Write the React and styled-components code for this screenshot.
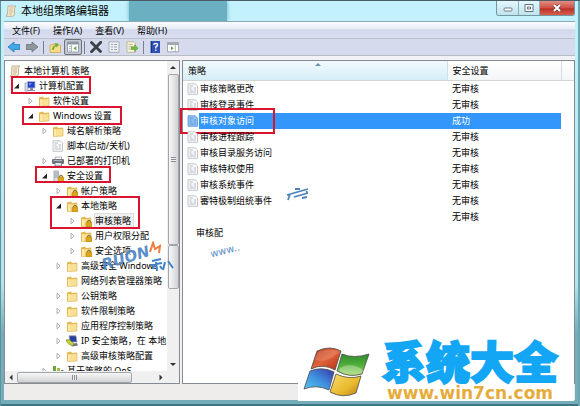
import styled, {createGlobalStyle, css} from 'styled-components';

const tree = [
  {level: 0, icon: 'scroll', text: '本地计算机 策略'},
  {level: 1, icon: 'computer', text: '计算机配置', open: true, mark: {left: 5, width: 80, height: 18}},
  {level: 2, icon: 'folder', text: '软件设置', closed: true},
  {level: 2, icon: 'folder', text: 'Windows 设置', open: true, mark: {left: 16, width: 100, height: 19}},
  {level: 3, icon: 'folder', text: '域名解析策略', closed: true},
  {level: 3, icon: 'script', text: '脚本(启动/关机)'},
  {level: 3, icon: 'printer', text: '已部署的打印机', closed: true},
  {level: 3, icon: 'server', text: '安全设置', open: true, mark: {left: 29, width: 76, height: 17}},
  {level: 4, icon: 'locked', text: '帐户策略', closed: true},
  {level: 4, icon: 'locked', text: '本地策略', open: true, mark: {left: 44, width: 90, height: 33}},
  {level: 5, icon: 'locked', text: '审核策略', closed: true, current: true},
  {level: 5, icon: 'locked', text: '用户权限分配', closed: true},
  {level: 5, icon: 'locked', text: '安全选项', closed: true},
  {level: 4, icon: 'folder', text: '高级安全 Windows', closed: true},
  {level: 4, icon: 'folder', text: '网络列表管理器策略'},
  {level: 4, icon: 'folder', text: '公钥策略', closed: true},
  {level: 4, icon: 'folder', text: '软件限制策略', closed: true},
  {level: 4, icon: 'folder', text: '应用程序控制策略', closed: true},
  {level: 4, icon: 'ipsec', text: 'IP 安全策略，在 本地', closed: true},
  {level: 4, icon: 'folder', text: '高级审核策略配置', closed: true},
  {level: 3, icon: 'chart', text: '基于策略的 QoS', closed: true},
];

const policies = [
  {name: '审核策略更改', value: '无审核'},
  {name: '审核登录事件', value: '无审核'},
  {name: '审核对象访问', value: '成功', selected: true},
  {name: '审核进程跟踪', value: '无审核'},
  {name: '审核目录服务访问', value: '无审核'},
  {name: '审核特权使用', value: '无审核'},
  {name: '审核系统事件', value: '无审核'},
  {name: '審特极制组统事件', value: '无审核'},
  {name: '', value: '无审核', noIcon: true},
  {name: '审核配', value: '', noIcon: true},
];

const Folder = () => (
  <>
    <path d="M1 2.5 L5 1.5 L6 3 L11 2.5 V11 H1Z" fill="#e3b94f" />
    <path d="M1.5 4 L11 3.5 V11 L1.5 11.5Z" fill="#fae094" stroke="#d9ad45" strokeWidth=".6" />
    <path d="M3 4 V11" stroke="#fff2bf" />
  </>
);

const Lock = () => (
  <>
    <path d="M7.5 7.5 V6.5 Q9 4.2 10.5 6.5 V7.5" fill="none" stroke="#94732a" strokeWidth="1.1" />
    <rect x="6" y="7" width="6" height="5" rx="1" fill="#dba51d" stroke="#a97a13" strokeWidth=".5" />
  </>
);

const Page = () => (
  <>
    <path d="M1 .8 H8 L10.5 3 V11.3 H1Z" fill="#fbfbfb" stroke="#b3b8be" strokeWidth=".8" />
    <path d="M2.5 3 H6 M2.5 5 H4.5 M6.5 5 H9 M2.5 7 H5.5 M7 7 H9 M2.5 9 H9" stroke="#a5b0bc" strokeWidth=".8" />
  </>
);

const shapes = {
  folder: <Folder />,
  locked: <><Folder /><Lock /></>,
  script: <Page />,
  scroll: (
    <>
      <path d="M3 1 H11 Q9 2 9.5 4 V9.5 Q9 11.5 7 11.3 H1 Q3 10 2.5 8Z" fill="#f3e9cf" stroke="#b39c72" strokeWidth=".7" />
      <path d="M4.5 3 H8 M4.2 5 H8 M4.2 7 H8 M4 9 H7" stroke="#b7a888" strokeWidth=".7" />
    </>
  ),
  computer: (
    <>
      <rect x="1" y="3" width="3" height="8" fill="#d7dbe6" stroke="#8087a0" strokeWidth=".6" />
      <path d="M3.5 1.5 H11 V8 H3.5Z" fill="#273fc1" stroke="#aeb6d8" strokeWidth=".8" />
      <path d="M5 3 H8 L5 6Z" fill="#6f91f5" />
      <path d="M6 8 H9 V10 H11 V11 H4 V10 H6Z" fill="#858ca8" />
    </>
  ),
  printer: (
    <>
      <path d="M3 2 H9.5 V5 H3Z" fill="#f4f6f8" stroke="#898f97" strokeWidth=".6" />
      <rect x="0" y="4" width="12" height="5" rx="1" fill="#6f767e" />
      <path d="M3 7.5 H9.5 V11 H3Z" fill="#dfe7f1" stroke="#4f565e" strokeWidth=".6" />
      <path d="M1.5 5.5 H10" stroke="#c2c8cf" strokeWidth=".8" />
    </>
  ),
  server: (
    <>
      <path d="M2 1 H6.5 V11.5 H2Z" fill="#dde2e7" stroke="#8a929b" strokeWidth=".7" />
      <path d="M2.5 3 H6 M2.5 5 H6 M2.5 7 H6" stroke="#7e8790" strokeWidth=".8" />
      <Lock />
    </>
  ),
  ipsec: (
    <>
      <path d="M3 .8 H10 L11 7 H4Z" fill="#263f9c" stroke="#98a1ae" strokeWidth=".8" />
      <path d="M5 9 L11 8 L12 10.5 L6 11.5Z" fill="#6c7480" />
      <path d="M0 5 Q3 3.5 5 6 L8 9 L6.5 10.5 Q2 10 0 5Z" fill="#c9cf36" stroke="#73801d" strokeWidth=".6" />
    </>
  ),
  chart: (
    <>
      <path d="M1 1 H4 V11 H1Z" fill="#69a545" />
      <path d="M5 3 H8 V11 H5Z" fill="#a8b952" />
      <path d="M9 5 H11.5 V11 H9Z" fill="#5d7e42" />
    </>
  ),
  back: <path d="M0 6 L6 1 V3.6 H12 V8.4 H6 V11Z" fill="#3fa9ea" stroke="#2479b4" strokeWidth=".8" />,
  forward: <path d="M12 6 L6 1 V3.6 H0 V8.4 H6 V11Z" fill="#8f959b" stroke="#6c7278" strokeWidth=".8" />,
  up: (
    <>
      <path d="M1 4 L6 3 L7 4.5 L11.5 4 V11.5 H1Z" fill="#f7dd8a" stroke="#c7a248" strokeWidth=".7" />
      <path d="M3 9 Q3 5 6.5 4 L5.8 2 L9.8 2.8 L7.8 6.6 L7 5.3 Q5 6 4.6 9Z" fill="#6fae35" />
    </>
  ),
  panes: (
    <>
      <path d="M.5 1 H11.5 V11 H.5Z" fill="#fff" stroke="#858d97" strokeWidth=".8" />
      <path d="M.5 1 H11.5 V3.5 H.5Z" fill="#8d97a4" />
      <path d="M4.5 4 V11" stroke="#9aa3ad" strokeWidth=".8" />
      <path d="M2 5.5 H3.5 M2 7.5 H3.5 M2 9.5 H3.5" stroke="#8199b5" strokeWidth=".8" />
      <path d="M9.3 5 V9.4 L6.6 7.2Z" fill="#58a23c" />
    </>
  ),
  remove: <path d="M1.5 1.5 L10.5 10.5 M10.8 1.2 L1.5 10.8" fill="none" stroke="#3c4145" strokeWidth="2.8" strokeLinecap="round" />,
  properties: (
    <>
      <path d="M1 .8 H11 V11.3 H1Z" fill="#eef0f4" stroke="#999fa7" strokeWidth=".8" />
      <path d="M3 3.5 H5 M6 3.5 H9 M3 6 H5 M6 6 H9 M3 8.5 H5 M6 8.5 H9" stroke="#98a5b5" />
    </>
  ),
  exportList: (
    <>
      <path d="M1 .8 H8 L9.5 2.3 V11.3 H1Z" fill="#fcf6d8" stroke="#b2ae8b" strokeWidth=".8" />
      <path d="M2.5 3.5 H6.5 M2.5 5.8 H6 M2.5 8 H5.5" stroke="#9a9f80" strokeWidth=".8" />
      <path d="M5.5 5.8 H8.5 V3.8 L12 7.2 L8.5 10.5 V8.5 H5.5Z" fill="#6dbb3e" stroke="#47902a" strokeWidth=".5" />
    </>
  ),
  help: (
    <>
      <rect x="1.5" y="0" width="9.5" height="12" fill="#2f51b4" />
      <path d="M2.5 0 V12" stroke="#1c3279" />
      <path d="M4.8 4 Q5 2.3 6.7 2.3 Q8.6 2.4 8.5 4 Q8.3 5 6.8 6 V7.6 M6.8 8.6 V10" fill="none" stroke="#fff" strokeWidth="1.3" />
    </>
  ),
  console: (
    <>
      <path d="M.5 1.5 H11.5 V10.8 H.5Z" fill="#fff" stroke="#8f979f" strokeWidth=".8" />
      <path d="M.5 1.5 H11.5 V4 H.5Z" fill="#a1a9b2" />
      <path d="M8.3 4 V11" stroke="#9aa3ad" strokeWidth=".8" />
      <path d="M4 5.3 V9.3 L6.6 7.3Z" fill="#58a23c" />
    </>
  ),
};

const Icon = ({name}) => (
  <Glyph viewBox="0 0 12 12" aria-hidden="true">{shapes[name]}</Glyph>
);

const TreeItem = ({item}) => (
  <Item $level={item.level} role="treeitem" aria-expanded={!!item.open}>
    {item.level > 0 && (
      <Expander aria-label={item.text} disabled={!item.open && !item.closed}>
        {item.open && <svg viewBox="0 0 8 8"><path d="M6 1.5 V6.5 H1Z" fill="#222" /></svg>}
        {item.closed && <svg viewBox="0 0 8 8"><path d="M2 1.2 L5.2 4 L2 6.8Z" fill="#fff" stroke="#a0a0a0" strokeWidth=".8" /></svg>}
      </Expander>
    )}
    <Icon name={item.icon} />
    <ItemText $current={item.current}>{item.text}</ItemText>
    {item.mark && <TreeMark $left={item.mark.left} $width={item.mark.width} $height={item.mark.height} />}
  </Item>
);

const App = () => {
  return (
    <>
      <GlobalStyle />
      <Window>
        <TitleBar>
          <Icon name="scroll" />
          <h1>本地组策略编辑器</h1>
          <Shade />
          <WindowButtons>
            <WindowButton aria-label="最小化">
              <svg viewBox="0 0 10 8"><rect x="1" y="4" width="8" height="3" rx="1" fill="#fff" stroke="#6c7d88" /></svg>
            </WindowButton>
            <WindowButton aria-label="最大化">
              <svg viewBox="0 0 10 8"><path d="M1 .5 H9 V7.5 H1Z M3.5 3 H6.5 V5 H3.5Z" fill="#fff" stroke="#5f717c" /></svg>
            </WindowButton>
            <WindowButton $close aria-label="关闭">
              <svg viewBox="0 0 10 8"><path d="M2 1 L8 7 M8 1 L2 7" stroke="#6e3a38" strokeWidth="3.2" /><path d="M2 1 L8 7 M8 1 L2 7" stroke="#fff" strokeWidth="2" /></svg>
            </WindowButton>
          </WindowButtons>
        </TitleBar>

        <MenuBar>
          <button>文件(F)</button>
          <button>操作(A)</button>
          <button>查看(V)</button>
          <button>帮助(H)</button>
        </MenuBar>

        <ToolBar>
          <Tool aria-label="后退"><Icon name="back" /></Tool>
          <Tool aria-label="前进"><Icon name="forward" /></Tool>
          <Divider />
          <Tool aria-label="上一级"><Icon name="up" /></Tool>
          <Tool $pressed aria-label="显示树"><Icon name="panes" /></Tool>
          <Divider />
          <Tool aria-label="删除"><Icon name="remove" /></Tool>
          <Tool aria-label="属性"><Icon name="properties" /></Tool>
          <Tool aria-label="导出列表"><Icon name="exportList" /></Tool>
          <Divider />
          <Tool aria-label="帮助"><Icon name="help" /></Tool>
          <Tool aria-label="显示操作窗格"><Icon name="console" /></Tool>
        </ToolBar>

        <Panes>
          <TreePane>
            <TreeBody>
              <Tree role="tree">
                {tree.map((item) => <TreeItem key={item.text} item={item} />)}
              </Tree>
              <VScroll>
                <Arrow viewBox="0 0 8 8"><path d="M2 5 L4 3 L6 5Z" /></Arrow>
                <Thumb $grow={170}><i /></Thumb>
                <Thumb $grow={42} />
                <Rest $grow={70} />
                <Arrow viewBox="0 0 8 8"><path d="M2 3 L4 5 L6 3Z" /></Arrow>
              </VScroll>
            </TreeBody>
            <HScroll>
              <Arrow viewBox="0 0 8 8"><path d="M5 2 L3 4 L5 6Z" /></Arrow>
              <Thumb $across $grow={110}><i /></Thumb>
              <Rest $grow={22} />
              <Arrow viewBox="0 0 8 8"><path d="M3 2 L5 4 L3 6Z" /></Arrow>
            </HScroll>
          </TreePane>

          <ListPane>
            <PolicyTable>
              <colgroup>
                <col />
                <col width="114" />
                <col width="13" />
              </colgroup>
              <thead>
                <tr>
                  <Head $sorted>
                    策略
                    <SortArrow viewBox="0 0 6 4"><path d="M0 4 L3 1 L6 4Z" fill="#6d8fa5" /></SortArrow>
                  </Head>
                  <Head>安全设置</Head>
                  <Head aria-hidden="true" />
                </tr>
              </thead>
              <tbody>
                {policies.map((policy, i) => (
                  <Row key={i} $selected={policy.selected}>
                    <td>
                      <Name $noIcon={policy.noIcon}>
                        {!policy.noIcon && <Icon name="script" />}
                        <span>{policy.name}</span>
                        {policy.selected && <RowMark />}
                      </Name>
                    </td>
                    <td>{policy.value}</td>
                    <td />
                  </Row>
                ))}
              </tbody>
            </PolicyTable>
          </ListPane>
        </Panes>

        <StatusBar />

        <Stamp $left={101} $top={247} $size={15} $turn={-17} $bold>
          RUON
        </Stamp>
        <StampMarks viewBox="0 0 26 32" aria-hidden="true">
          <path d="M2 11 L5 2 L7 8 L12 5 L11 12" fill="none" stroke="#ef7b3c" strokeWidth="2" />
          <path d="M4 20 L13 18 M2 24 L14 22 M8 21 L9 30 M5 28 L6 25 M12 25 L14 28 M17 21 L15 29 M20 20 L25 27" stroke="#3f83c4" strokeWidth="2" fill="none" />
        </StampMarks>
        <Stamp $left={210} $top={240} $size={10} $turn={-14}>www..</Stamp>
        <Stroke viewBox="0 0 26 14" aria-hidden="true">
          <path d="M1 8 L22 2 M4 7 L2 13 M9 2 H14 M8 10 L22 6 M16 11 L21 10 M20 2 L21 6" stroke="#4c83bd" strokeWidth="1.8" fill="none" />
        </Stroke>

        <SiteBadge href="#">
          <Flag />
          <SiteText>
            <strong>系统大全</strong>
            <span>www.win7cn.com</span>
          </SiteText>
        </SiteBadge>
      </Window>
    </>
  )
}

const Flag = () => (
  <FlagSvg viewBox="0 0 68 50" aria-hidden="true">
    <defs>
      <linearGradient id="red" x1="0" y1="0" x2="1" y2="1">
        <stop offset="0" stopColor="#b5381c" />
        <stop offset=".5" stopColor="#e0623a" />
        <stop offset="1" stopColor="#b02d14" />
      </linearGradient>
      <linearGradient id="green" x1="0" y1="0" x2="0" y2="1">
        <stop offset="0" stopColor="#2f8a2b" />
        <stop offset=".5" stopColor="#4fae3a" />
        <stop offset="1" stopColor="#9bd660" />
      </linearGradient>
      <linearGradient id="blue" x1="1" y1="0" x2="0" y2="1">
        <stop offset="0" stopColor="#3a35a8" />
        <stop offset=".5" stopColor="#3f8fdd" />
        <stop offset="1" stopColor="#58c7f0" />
      </linearGradient>
      <linearGradient id="yellow" x1="0" y1="0" x2="1" y2="1">
        <stop offset="0" stopColor="#f8dd6d" />
        <stop offset=".6" stopColor="#e9b92c" />
        <stop offset="1" stopColor="#b77d18" />
      </linearGradient>
    </defs>
    <g stroke="#4d4a48" strokeWidth=".8">
      <path d="M14 4 Q27 -2 38 4 L32 23 Q20 16 8 22Z" fill="url(#red)" />
      <path d="M39 7 Q51 12 66 7 L59 27 Q46 31 34 24Z" fill="url(#green)" />
      <path d="M7 24 Q19 19 31 25 L26 43 Q13 37 1 42Z" fill="url(#blue)" />
      <path d="M33 27 Q46 33 58 29 L53 46 Q40 52 27 45Z" fill="url(#yellow)" />
    </g>
    <path d="M12 13 Q24 16 34 7 L37 5 Q27 0 15 5Z" fill="#fff" opacity=".15" />
    <path d="M37 21 Q47 14 60 23 L59 26 Q46 30 36 24Z" fill="#fff" opacity=".3" />
  </FlagSvg>
)

const GlobalStyle = createGlobalStyle`
    * {
        box-sizing: border-box;
    }

    body {
        margin: 0;
        font-family: 'Noto Sans', 'Noto Sans CJK SC', sans-serif;
        font-size: 9px;
        color: #000;
    }

    button {
        font: inherit;
        color: inherit;
        border: 0;
        padding: 0;
        background: none;
    }

    h1, ul {
        margin: 0;
        padding: 0;
    }
`;

const Glyph = styled.svg`
    width: 12px;
    height: 12px;
    flex: none;
`;

const Window = styled.main`
    position: relative;
    display: flex;
    flex-direction: column;
    height: 100vh;
    padding: 0 5px 6px 4px;
    border-top: 1px solid #4a5d66;
    background: linear-gradient(#c3f2fc, #b4e4ee 70%, #74adb9 82%);
    box-shadow: inset 1px 0 #61919d, inset -2px 0 #6aa5b1, inset 0 -2px #3f7684;
    overflow: hidden;
`;

const TitleBar = styled.header`
    display: flex;
    align-items: center;
    height: 20px;
    flex: none;
    padding-left: 1px;
    gap: 4px;

    h1 {
        font-size: 11px;
        font-weight: 400;
        line-height: 18px;
        white-space: nowrap;
    }
`;

const Shade = styled.div`
    width: 98px;
    height: 20px;
    margin-left: 16px;
    background: #6bb0c2;
    box-shadow: 0 0 4px #6bb0c2;
    clip-path: inset(0 -6px);
`;

const WindowButtons = styled.div`
    display: flex;
    align-self: flex-start;
    margin-left: auto;
    border: 1px solid #7296a3;
    border-top: 0;
    border-radius: 0 0 3px 3px;
    overflow: hidden;
`;

const WindowButton = styled.button`
    display: grid;
    place-items: center;
    width: ${({$close}) => ($close ? '35px' : '21px')};
    height: 14px;
    border-left: 1px solid #8fb0bb;
    background: ${({$close}) => ($close ? 'linear-gradient(#e08d84, #cf4f42 50%, #bb3127 55%, #d5604f)' : 'linear-gradient(#e2f8fd, #bfe3ec)')};

    &:first-child {
        border-left: 0;
    }

    svg {
        width: 10px;
        height: 8px;
    }
`;

const MenuBar = styled.nav`
    display: flex;
    align-items: center;
    gap: 13px;
    height: 18px;
    flex: none;
    padding-left: 8px;
    border-top: 1px solid #8caab4;
    border-bottom: 1px solid #bcc0cb;
    background: linear-gradient(#fbfcfe, #e9edf7 40%, #d3d9ec 50%, #d9def0);

    button {
        white-space: nowrap;
    }
`;

const ToolBar = styled.div`
    display: flex;
    align-items: center;
    height: 17px;
    flex: none;
    padding-left: 1px;
    border-bottom: 1px solid #b9bcc5;
    background: #d5dbed;
`;

const Tool = styled.button`
    display: grid;
    place-items: center;
    width: 18px;
    height: 16px;

    ${({$pressed}) => $pressed && css`
        border: 1px solid #6d727c;
        border-radius: 2px;
        background: #c3c8d5;
    `}
`;

const Divider = styled.span`
    width: 1px;
    height: 13px;
    margin: 0 2px;
    background: #7b8190;
`;

const Panes = styled.div`
    display: grid;
    grid-template-columns: 176px 1fr;
    grid-template-rows: minmax(0, 1fr);
    gap: 2px;
    flex: 1;
    min-height: 0;
    padding-top: 4px;
    background: #f1f1f6;
`;

const TreePane = styled.section`
    display: flex;
    flex-direction: column;
    min-width: 0;
    border: 1px solid #868b92;
    background: #fff;
`;

const TreeBody = styled.div`
    display: flex;
    flex: 1;
    min-height: 0;
`;

const Tree = styled.ul`
    flex: 1;
    min-width: 0;
    padding-top: 2px;
    padding-left: 1px;
    list-style: none;
    overflow: hidden;
`;

const Item = styled.li`
    position: relative;
    display: flex;
    align-items: center;
    gap: 3px;
    height: 15px;
    padding-left: ${({$level}) => ($level ? 7 + ($level - 1) * 14 : 3)}px;
    white-space: nowrap;
`;

const Expander = styled.button`
    width: 8px;
    height: 8px;
    flex: none;

    svg {
        display: block;
    }
`;

const ItemText = styled.span`
    line-height: 13px;

    ${({$current}) => $current && css`
        padding-right: 2px;
        background: #f0f0f0;
        box-shadow: 0 0 0 1px #dedede;
    `}
`;

const TreeMark = styled.span`
    position: absolute;
    top: -2px;
    left: ${({$left}) => $left}px;
    width: ${({$width}) => $width}px;
    height: ${({$height}) => $height}px;
    border: 2px solid #d9142f;
    z-index: 1;
`;

const VScroll = styled.div`
    display: flex;
    flex-direction: column;
    align-items: center;
    width: 12px;
    background: #f0f0f1;
`;

const HScroll = styled(VScroll)`
    flex-direction: row;
    width: auto;
    height: 12px;
    padding-right: 12px;
`;

const Arrow = styled.svg`
    width: 12px;
    height: 13px;
    flex: none;
    fill: #333;
`;

const Thumb = styled.div`
    display: grid;
    place-items: center;
    flex: ${({$grow}) => $grow} 1 0;
    width: 11px;
    border: 1px solid #a2a5aa;
    border-radius: 2px;
    background: linear-gradient(90deg, #f7f7f7, #e4e5e7 50%, #cfd1d4);

    i {
        width: 5px;
        height: 5px;
        background: repeating-linear-gradient(#8b8e93 0 1px, #eee 1px 2px);
    }

    ${({$across}) => $across && css`
        width: auto;
        height: 11px;
        background: linear-gradient(#f7f7f7, #e4e5e7 50%, #cfd1d4);

        i {
            background: repeating-linear-gradient(90deg, #8b8e93 0 1px, #eee 1px 2px);
        }
    `}
`;

const Rest = styled.div`
    flex: ${({$grow}) => $grow} 1 0;
`;

const ListPane = styled.section`
    min-width: 0;
    border: 1px solid #868b92;
    background: #fff;
`;

const PolicyTable = styled.table`
    width: 100%;
    table-layout: fixed;
    border-collapse: collapse;

    td {
        height: 16px;
        padding: 0 0 0 5px;
        line-height: 14px;
        white-space: nowrap;
    }

    td:first-child {
        padding: 0;
    }
`;

const Head = styled.th`
    position: relative;
    height: 19px;
    padding: 0 0 0 5px;
    font-weight: 400;
    text-align: left;
    border-right: 1px solid #d5dde3;
    border-bottom: 1px solid #d5d5d5;
    background: ${({$sorted}) => ($sorted ? 'linear-gradient(#f2fafd, #e3f4fb 50%, #d5edf8)' : 'linear-gradient(#fff, #f4f5f6)')};

    &:last-child {
        border-right: 0;
    }
`;

const SortArrow = styled.svg`
    position: absolute;
    top: 1px;
    left: 50%;
    width: 6px;
    height: 4px;
`;

const Name = styled.div`
    position: relative;
    display: flex;
    align-items: center;
    height: 16px;
    padding-left: ${({$noIcon}) => ($noIcon ? '12px' : '4px')};

    span {
        flex: 1;
        line-height: 16px;
        padding-left: 1px;
    }
`;

const Row = styled.tr`
    ${({$selected}) => $selected && css`
        color: #fff;

        td:nth-child(2), span {
            background: #3296fc;
        }

        path {
            fill: #8fc0f5;
            stroke: #5b93d6;
        }
    `}
`;

const RowMark = styled.b`
    position: absolute;
    top: -5px;
    left: -3px;
    width: 95px;
    height: 26px;
    border: 2px solid #d9142f;
`;

const StatusBar = styled.footer`
    height: 16px;
    flex: none;
    background: #efedec;
`;

const Stamp = styled.span`
    position: absolute;
    left: ${({$left}) => $left}px;
    top: ${({$top}) => $top}px;
    font-family: 'DejaVu Sans', sans-serif;
    font-size: ${({$size}) => $size}px;
    font-weight: ${({$bold}) => ($bold ? 700 : 400)};
    font-style: ${({$bold}) => ($bold ? 'italic' : 'normal')};
    line-height: 20px;
    color: #4a82c0;
    opacity: .9;
    transform: rotate(${({$turn}) => $turn}deg);
    pointer-events: none;
`;

const StampMarks = styled.svg`
    position: absolute;
    left: 148px;
    top: 240px;
    width: 26px;
    height: 32px;
    pointer-events: none;
`;

const Stroke = styled.svg`
    position: absolute;
    left: 286px;
    top: 186px;
    width: 26px;
    height: 14px;
`;

const SiteBadge = styled.a`
    position: absolute;
    right: 6px;
    bottom: 5px;
    display: flex;
    align-items: center;
    gap: 8px;
    padding: 0 13px 0 5px;
    background: #fff;
    text-decoration: none;
`;

const FlagSvg = styled.svg`
    width: 68px;
    height: 50px;
`;

const SiteText = styled.span`
    display: flex;
    flex-direction: column;
    align-items: center;
    width: 182px;

    strong {
        font-size: 44px;
        font-weight: 900;
        line-height: 40px;
        padding-bottom: 3px;
        color: #12a6f5;
        -webkit-text-stroke: 2px #12a6f5;
    }

    span {
        font-family: 'DejaVu Sans', sans-serif;
        font-size: 17px;
        font-weight: 700;
        line-height: 16px;
        color: #e6ac3b;
    }
`;

export default App
